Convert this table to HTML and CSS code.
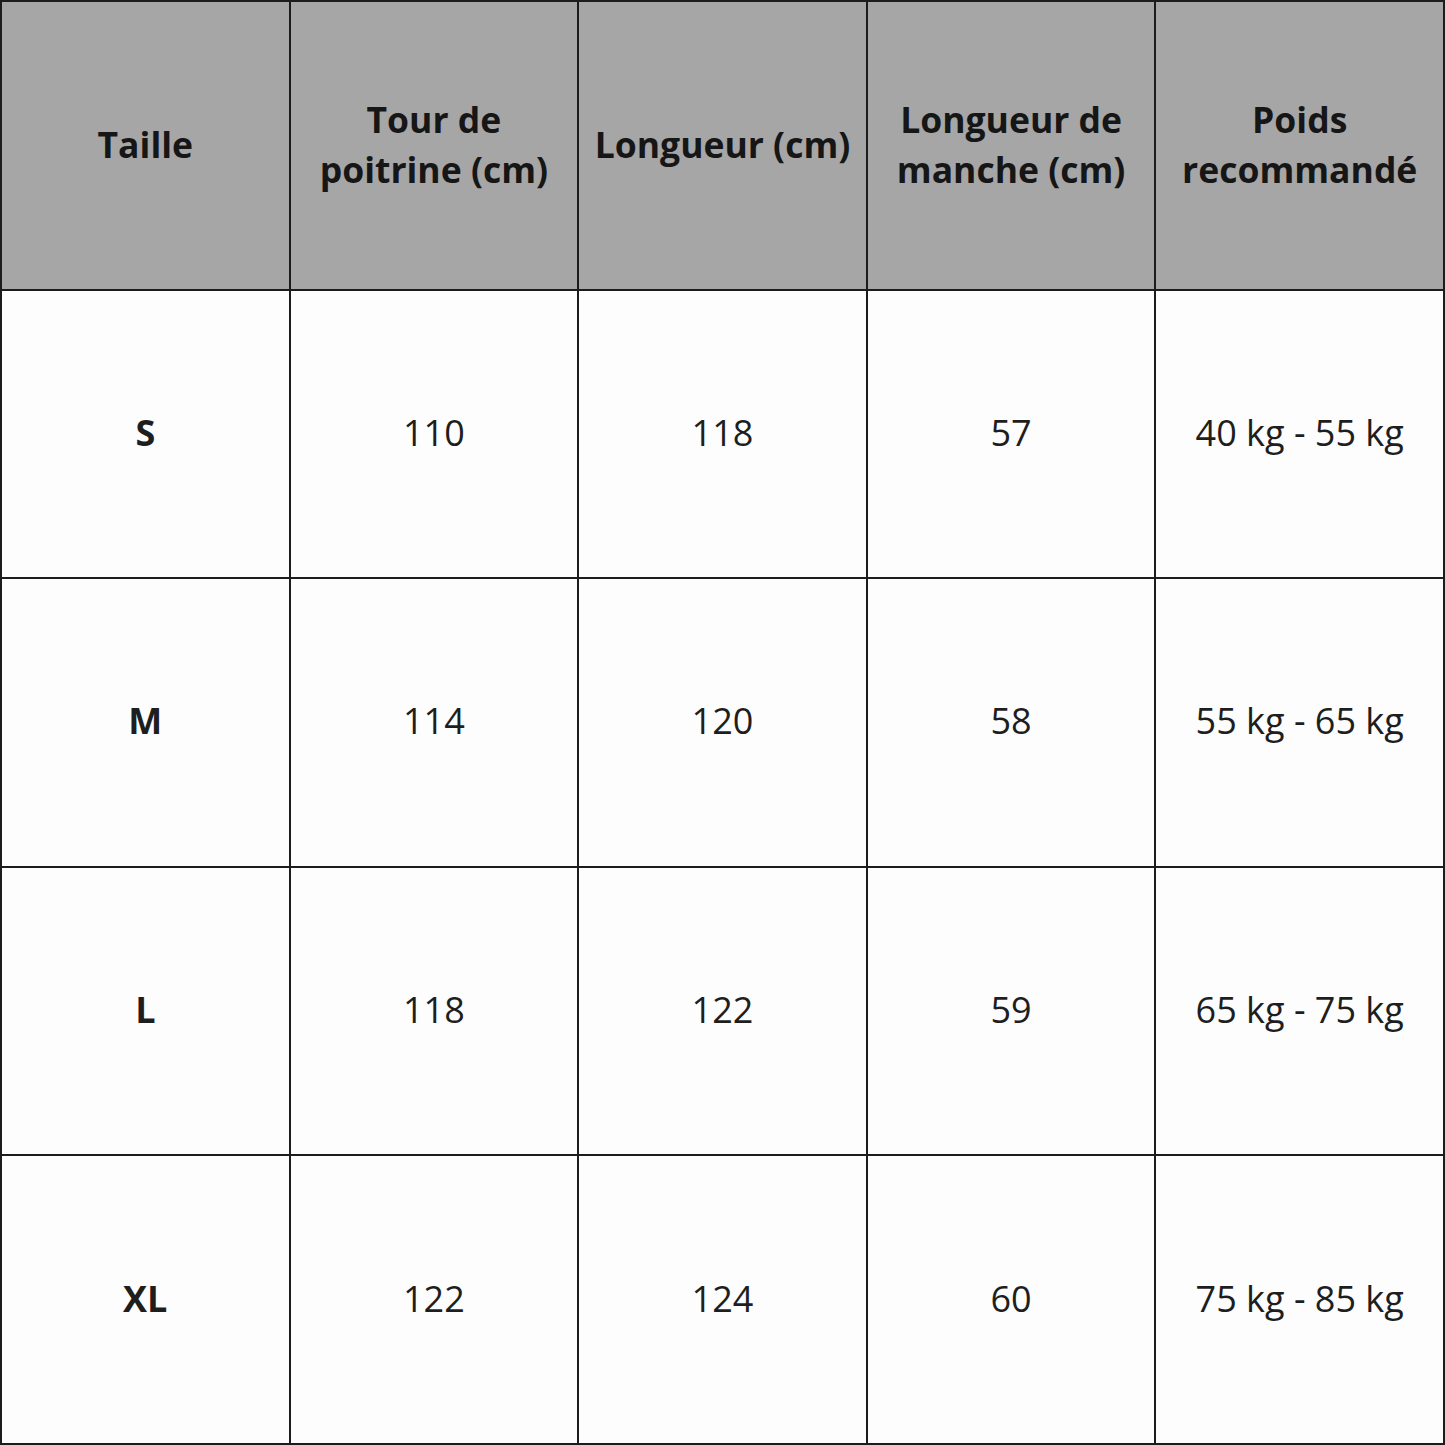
FILE: index.html
```html
<!DOCTYPE html>
<html lang="fr">
<head>
<meta charset="utf-8">
<link rel="stylesheet" href="styles.css">
<title>Guide des tailles</title>
</head>
<body>
<div class="chart">
  <div class="cell head">Taille</div>
  <div class="cell head">Tour de<br>poitrine (cm)</div>
  <div class="cell head">Longueur (cm)</div>
  <div class="cell head">Longueur de<br>manche (cm)</div>
  <div class="cell head">Poids<br>recommandé</div>

  <div class="cell size">S</div>
  <div class="cell">110</div>
  <div class="cell">118</div>
  <div class="cell">57</div>
  <div class="cell">40 kg - 55 kg</div>

  <div class="cell size">M</div>
  <div class="cell">114</div>
  <div class="cell">120</div>
  <div class="cell">58</div>
  <div class="cell">55 kg - 65 kg</div>

  <div class="cell size">L</div>
  <div class="cell">118</div>
  <div class="cell">122</div>
  <div class="cell">59</div>
  <div class="cell">65 kg - 75 kg</div>

  <div class="cell size">XL</div>
  <div class="cell">122</div>
  <div class="cell">124</div>
  <div class="cell">60</div>
  <div class="cell">75 kg - 85 kg</div>
</div>
</body>
</html>
```
FILE: styles.css
```css
html, body {
  margin: 0;
  padding: 0;
  background: #ffffff;
}

.chart {
  width: 1445px;
  height: 1445px;
  box-sizing: border-box;
  display: grid;
  grid-template-columns: repeat(5, 1fr);
  grid-template-rows: repeat(5, 1fr);
  gap: 2px;
  padding: 2px;
  background: #1c1c1c;
  font-family: "Open Sans", "DejaVu Sans", sans-serif;
  color: #1e1e1e;
}

.cell {
  background: #fdfdfd;
  display: flex;
  align-items: center;
  justify-content: center;
  text-align: center;
  font-size: 36px;
  line-height: 50px;
  padding-bottom: 2px;
}

.head {
  background: #a6a6a6;
  font-weight: 700;
  font-size: 35.5px;
  color: #161616;
}

.size {
  font-weight: 700;
}
```
